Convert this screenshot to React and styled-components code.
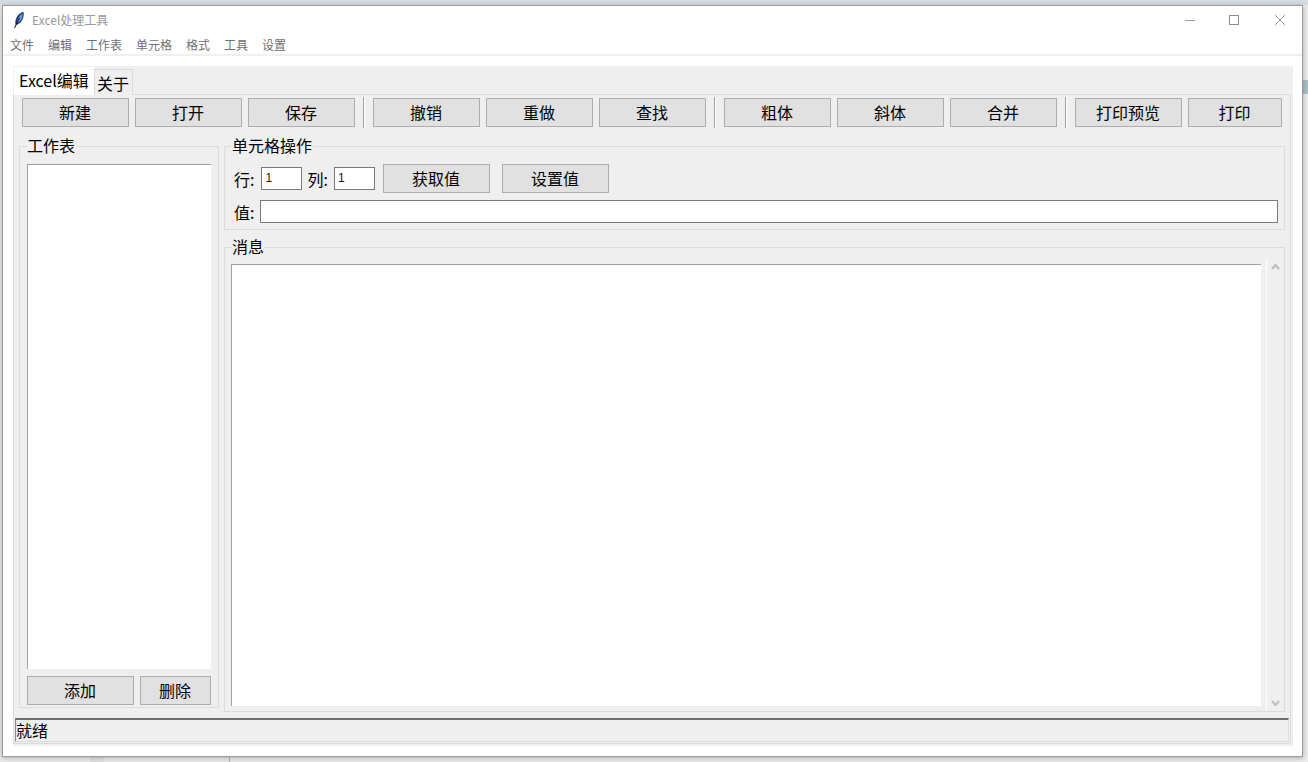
import React from "react";
import styled, { createGlobalStyle } from "styled-components";

const PANEL = "#efefef";

const Global = createGlobalStyle`
  html, body { margin: 0; padding: 0; }
  body { font-family: "Noto Sans CJK SC", "Liberation Sans", sans-serif; font-size: 16px; color: #000; }
  * { box-sizing: border-box; }
`;

const Desktop = styled.div`
  width: 1308px; height: 762px; overflow: hidden;
  padding: 5px 5px 5px 2px;
  background:
    linear-gradient(#a9bfc8, #a9bfc8) right 0 top 80px / 5px 14px no-repeat,
    linear-gradient(#d6dde0, #d6dde0) 0 0 / 100% 5px no-repeat,
    linear-gradient(#d0d0d0, #d0d0d0) 89px 0 / 1px 5px no-repeat,
    linear-gradient(#e2e2e2, #e2e2e2) 90px 757px / 14px 5px no-repeat,
    linear-gradient(#b5b5b5, #b5b5b5) 229px 757px / 1px 5px no-repeat,
    #ececec;
`;
const Win = styled.div`
  width: 1301px; height: 752px; background: #fff;
  border: 1px solid #9c9c9c;
  box-shadow: 0 1px 5px rgba(0,0,0,.28);
  display: flex; flex-direction: column;
`;
const TitleBar = styled.div`
  height: 27px; display: flex; align-items: center; padding-left: 10px; flex: none;
`;
const TitleText = styled.span`
  font-size: 12px; color: #999; margin-left: 7px; line-height: 27px;
`;
const WinControls = styled.div`
  margin-left: auto; display: flex; align-items: center; height: 100%;
`;
const WinBtn = styled.div`
  width: 45px; height: 27px; display: flex; align-items: center; justify-content: center;
`;
const MenuBar = styled.div`
  height: 23px; display: flex; padding-left: 7px; gap: 14px; border-bottom: 2px solid #f0f0f0; flex: none;
`;
const MenuItem = styled.span`
  font-size: 12px; color: #6f6f6f; line-height: 24px;
`;
const Notebook = styled.div`
  margin: 10px 9px 0 10px; background: ${PANEL}; height: 680px; padding-top: 1px; padding-right: 2px;
  display: flex; flex-direction: column;
`;
const Tabs = styled.div`
  display: flex; align-items: flex-end; height: 28px; padding-left: 1px; flex: none; position: relative; z-index: 1;
`;
const Tab = styled.div`
  height: ${p => (p.$active ? "28px" : "26px")};
  width: ${p => (p.$active ? "80px" : "39px")};
  background: ${p => (p.$active ? "#fff" : PANEL)};
  border: ${p => (p.$active ? "none" : "1px solid #dcdcdc")};
  border-bottom: none;
  padding-left: ${p => (p.$active ? "5px" : "2px")};
  font-size: 16px; line-height: 27px;
  white-space: nowrap;
`;
const Pane = styled.div`
  flex: 1; margin-top: -1px; border: 1px solid #dcdcdc;
  margin-bottom: 2px;
`;
const Toolbar = styled.div`
  display: flex; align-items: center; height: 33px; padding: 2px 0 0 8px; gap: 6px;
`;
const Btn = styled.div`
  width: ${p => p.$w || 107}px; height: 29px; flex: none; margin-left: ${p => p.$ml || 0}px;
  background: #e1e1e1; border: 1px solid #adadad;
  padding: 0 1px 2px 0;
  display: flex; align-items: center; justify-content: center;
  font-size: 16px; line-height: 1; color: #000;
`;
const Sep = styled.div`
  width: 2px; height: 31px; margin: 0 2px; flex: none;
  border-left: 1px solid #a0a0a0; background: #fff;
`;
const Main = styled.div`
  display: grid; grid-template-columns: 200px 1061px; gap: 5px; margin: 18px 0 0 5px; align-items: start;
`;
const Group = styled.div`
  position: relative; border: 1px solid #dcdcdc; height: ${p => p.$h}px;
`;
const Legend = styled.span`
  position: absolute; top: -12px; left: 6px; background: ${PANEL}; padding: 0 1px; font-size: 16px; line-height: 20px;
`;
const LeftInner = styled.div`
  display: flex; flex-direction: column; padding: 17px 7px 0; gap: 7px;
`;
const ListBox = styled.div`
  height: 505px; background: #fff; border-top: 1px solid #a0a0a0; border-left: 1px solid #a0a0a0;
`;
const BtnRow = styled.div`
  display: flex; gap: 6px;
`;
const RightCol = styled.div`
  display: flex; flex-direction: column; gap: 17px;
`;
const CellInner = styled.div`
  display: flex; flex-direction: column; gap: 7px; padding: 17px 6px 0 9px;
`;
const FormRow = styled.div`
  display: flex; align-items: center; height: ${p => p.$h}px;
`;
const Label = styled.span`
  font-size: 16px; line-height: 1; margin-right: ${p => p.$mr}px; white-space: nowrap;
`;
const Input = styled.div`
  width: ${p => (p.$grow ? "auto" : "41px")}; flex: ${p => (p.$grow ? 1 : "none")};
  height: 23px; background: #fff; border: 1px solid #7a7a7a; margin-right: ${p => p.$mr || 0}px;
  font-family: "Liberation Sans", sans-serif; font-size: 12px; line-height: 21px; padding-left: 3px; color: #111;
`;
const MsgInner = styled.div`
  display: flex; height: 100%; padding-left: 6px;
`;
const TextArea = styled.div`
  width: 1030px; height: 442px; margin-top: 16px; background: #fff;
  border-top: 1px solid #a0a0a0; border-left: 1px solid #a0a0a0;
`;
const ScrollBar = styled.div`
  width: 18px; margin: 11px 0 0 5px; flex: none; border-left: 1px solid #fff;
  display: flex; flex-direction: column; justify-content: space-between; align-items: center; padding: 4px 0 4px;
`;
const Status = styled.div`
  margin: 6px 1px 0 1px; height: 24px; border-top: 2px solid #6e6e6e; border-left: 1px solid #8a8a8a;
  border-bottom: 1px solid #dcdcdc; border-right: 1px solid #dcdcdc;
  font-size: 16px; line-height: 21px;
`;

const Feather = () => (
  <svg width="12" height="18" viewBox="0 0 12 18">
    <path d="M2.5 14C1.5 9 4 3 10.5 .8c1 5-1.5 11-6 12.7z" fill="#1a3563" />
    <path d="M4 12C4 8 6.2 4.6 9.6 2.4c.2 4-1.4 7.600-5.100 9.600z" fill="#6a9de6" />
    <path d="M1.500 17 6.500 7" stroke="#0a1428" strokeWidth="1" fill="none" />
  </svg>
);
const Chevron = ({ up }) => (
  <svg width="9" height="7" viewBox="0 0 9 7">
    <path d={up ? "M1 6l3.5-4L8 6" : "M1 1l3.5 4L8 1"} fill="none" stroke="#bdbdbd" strokeWidth="2" />
  </svg>
);

const tools = [
  ["新建", "打开", "保存"],
  ["撤销", "重做", "查找"],
  ["粗体", "斜体", "合并"],
  ["打印预览", "打印"],
];

export default function App() {
  return (
    <>
      <Global />
      <Desktop>
        <Win>
          <TitleBar>
            <Feather />
            <TitleText>Excel处理工具</TitleText>
            <WinControls>
              <WinBtn>
                <svg width="12" height="12" viewBox="0 0 12 12"><path d="M1 6.5h10" stroke="#999" /></svg>
              </WinBtn>
              <WinBtn>
                <svg width="12" height="12" viewBox="0 0 12 12"><rect x="0.5" y="1.500" width="9" height="9" fill="none" stroke="#888" /></svg>
              </WinBtn>
              <WinBtn>
                <svg width="12" height="12" viewBox="0 0 12 12"><path d="M1 1l10 10M11 1L1 11" stroke="#999" /></svg>
              </WinBtn>
            </WinControls>
          </TitleBar>
          <MenuBar>
            {["文件", "编辑", "工作表", "单元格", "格式", "工具", "设置"].map(m => (
              <MenuItem key={m}>{m}</MenuItem>
            ))}
          </MenuBar>
          <Notebook>
            <Tabs>
              <Tab $active>Excel编辑</Tab>
              <Tab>关于</Tab>
            </Tabs>
            <Pane>
              <Toolbar>
                {tools.map((g, i) => (
                  <React.Fragment key={i}>
                    {i > 0 && <Sep />}
                    {g.map(t => (
                      <Btn key={t} $w={t === "打印" ? 94 : 107}>{t}</Btn>
                    ))}
                  </React.Fragment>
                ))}
              </Toolbar>
              <Main>
                <Group $h={562}>
                  <Legend>工作表</Legend>
                  <LeftInner>
                    <ListBox />
                    <BtnRow>
                      <Btn>添加</Btn>
                      <Btn $w={71}>删除</Btn>
                    </BtnRow>
                  </LeftInner>
                </Group>
                <RightCol>
                  <Group $h={84}>
                    <Legend>单元格操作</Legend>
                    <CellInner>
                      <FormRow $h={29}>
                        <Label $mr={7}>行:</Label>
                        <Input $mr={5}>1</Input>
                        <Label $mr={6}>列:</Label>
                        <Input $mr={8}>1</Input>
                        <Btn>获取值</Btn>
                        <Btn $ml={12}>设置值</Btn>
                      </FormRow>
                      <FormRow $h={23}>
                        <Label $mr={6}>值:</Label>
                        <Input $grow />
                      </FormRow>
                    </CellInner>
                  </Group>
                  <Group $h={465}>
                    <Legend>消息</Legend>
                    <MsgInner>
                      <TextArea />
                      <ScrollBar>
                        <Chevron up />
                        <Chevron />
                      </ScrollBar>
                    </MsgInner>
                  </Group>
                </RightCol>
              </Main>
              <Status>就绪</Status>
            </Pane>
          </Notebook>
        </Win>
      </Desktop>
    </>
  );
}
